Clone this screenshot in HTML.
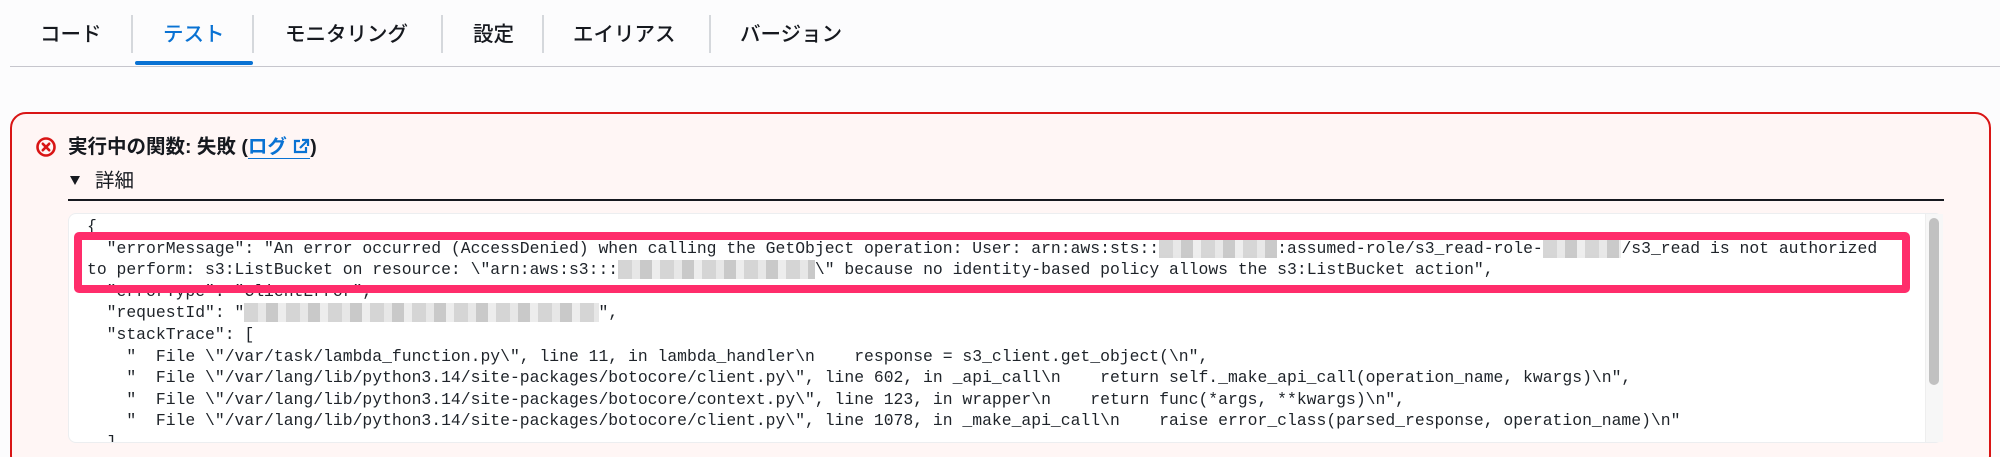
<!DOCTYPE html>
<html><head><meta charset="utf-8"><style>
*{margin:0;padding:0;box-sizing:border-box}
html,body{width:2000px;height:457px;overflow:hidden;background:#fcfcfd;font-family:"Liberation Sans","Noto Sans CJK JP",sans-serif;position:relative}
.tab{position:absolute;top:22px;font-size:20.5px;line-height:26px;color:#16191f;font-weight:500;white-space:nowrap}
.sep{position:absolute;top:15px;width:2px;height:38px;background:#d5d8dc}
.ul{position:absolute;left:135px;top:61px;width:118px;height:4px;border-radius:2px;background:#0972d3}
.gl{position:absolute;left:10px;right:0;top:66px;height:1px;background:#c6c6cd}
.box{position:absolute;left:10px;top:112px;width:1981px;height:360px;border:2px solid #d91515;border-radius:16px;background:#fff6f5}
.title{position:absolute;left:68px;top:134px;font-size:19.5px;font-weight:bold;color:#16191f;line-height:26px;white-space:nowrap}
.title a{color:#0972d3;text-decoration:none;border-bottom:1.5px solid #0972d3}
.det{position:absolute;left:95px;top:168px;font-size:19.5px;color:#16191f;line-height:26px}
.tri{position:absolute;left:70px;top:176px;width:0;height:0;border-left:5.5px solid transparent;border-right:5.5px solid transparent;border-top:9px solid #16191f}
.rule{position:absolute;left:68px;top:199px;width:1876px;height:2px;background:#16191f}
.code{position:absolute;left:68px;top:213px;width:1875px;height:230px;background:#fff;border:1px solid #eceef0;border-radius:8px;overflow:hidden}
pre{position:absolute;left:18px;top:2px;font-family:"Liberation Mono",monospace;font-size:16.4px;line-height:21.6px;color:#1e2329}
.b{color:transparent;background:repeating-linear-gradient(90deg,#c8c8c8 0 14px,#e0e0e0 14px 22px,#b8b8b8 22px 34px,#e8e8e8 34px 42px);opacity:.75}
.hl{position:absolute;left:74px;top:232px;width:1836px;height:61px;border:8px solid #ff2d6b;border-radius:5px}
.track{position:absolute;left:1925px;top:214px;width:18px;height:228px;background:#f7f7f7;border-left:1px solid #eee}
.thumb{position:absolute;left:1929px;top:218px;width:10px;height:167px;border-radius:5px;background:#c1c1c1}
</style></head><body>
<div class="tab" style="left:40px">コード</div>
<div class="sep" style="left:131px"></div>
<div class="tab" style="left:163px;color:#0972d3">テスト</div>
<div class="sep" style="left:252px"></div>
<div class="tab" style="left:285px">モニタリング</div>
<div class="sep" style="left:441px"></div>
<div class="tab" style="left:473px">設定</div>
<div class="sep" style="left:542px"></div>
<div class="tab" style="left:573px">エイリアス</div>
<div class="sep" style="left:709px"></div>
<div class="tab" style="left:740px">バージョン</div>
<div class="ul"></div>
<div class="gl"></div>
<div class="box"></div>
<svg style="position:absolute;left:35px;top:136px" width="22" height="22" viewBox="0 0 22 22"><circle cx="11" cy="11" r="8.5" fill="none" stroke="#d91515" stroke-width="2.6"/><path d="M7.8 7.8L14.2 14.2M14.2 7.8L7.8 14.2" stroke="#d91515" stroke-width="2.6" stroke-linecap="round"/></svg>
<div class="title">実行中の関数: 失敗 (<a>ログ <svg width="18" height="16" viewBox="0 0 18 16" style="vertical-align:-1px"><path d="M8 3H3v11h11V9" fill="none" stroke="#0972d3" stroke-width="2.2"/><path d="M10 2h6v6M16 2L8 10" fill="none" stroke="#0972d3" stroke-width="2.2"/></svg></a>)</div>
<div class="tri"></div>
<div class="det">詳細</div>
<div class="rule"></div>
<div class="code">
<pre>{
  "errorMessage": "An error occurred (AccessDenied) when calling the GetObject operation: User: arn:aws:sts::<span class="b">123456789012</span>:assumed-role/s3_read-role-<span class="b">abcd1234</span>/s3_read is not authorized
to perform: s3:ListBucket on resource: \"arn:aws:s3:::<span class="b">xxxxxxxxxxxxxxxxxxxx</span>\" because no identity-based policy allows the s3:ListBucket action",
  "errorType": "ClientError",
  "requestId": "<span class="b">xxxxxxxx-xxxx-xxxx-xxxx-xxxxxxxxxxxx</span>",
  "stackTrace": [
    "  File \"/var/task/lambda_function.py\", line 11, in lambda_handler\n    response = s3_client.get_object(\n",
    "  File \"/var/lang/lib/python3.14/site-packages/botocore/client.py\", line 602, in _api_call\n    return self._make_api_call(operation_name, kwargs)\n",
    "  File \"/var/lang/lib/python3.14/site-packages/botocore/context.py\", line 123, in wrapper\n    return func(*args, **kwargs)\n",
    "  File \"/var/lang/lib/python3.14/site-packages/botocore/client.py\", line 1078, in _make_api_call\n    raise error_class(parsed_response, operation_name)\n"
  ]
}</pre>
</div>
<div class="track"></div>
<div class="thumb"></div>
<div class="hl"></div>
</body></html>
